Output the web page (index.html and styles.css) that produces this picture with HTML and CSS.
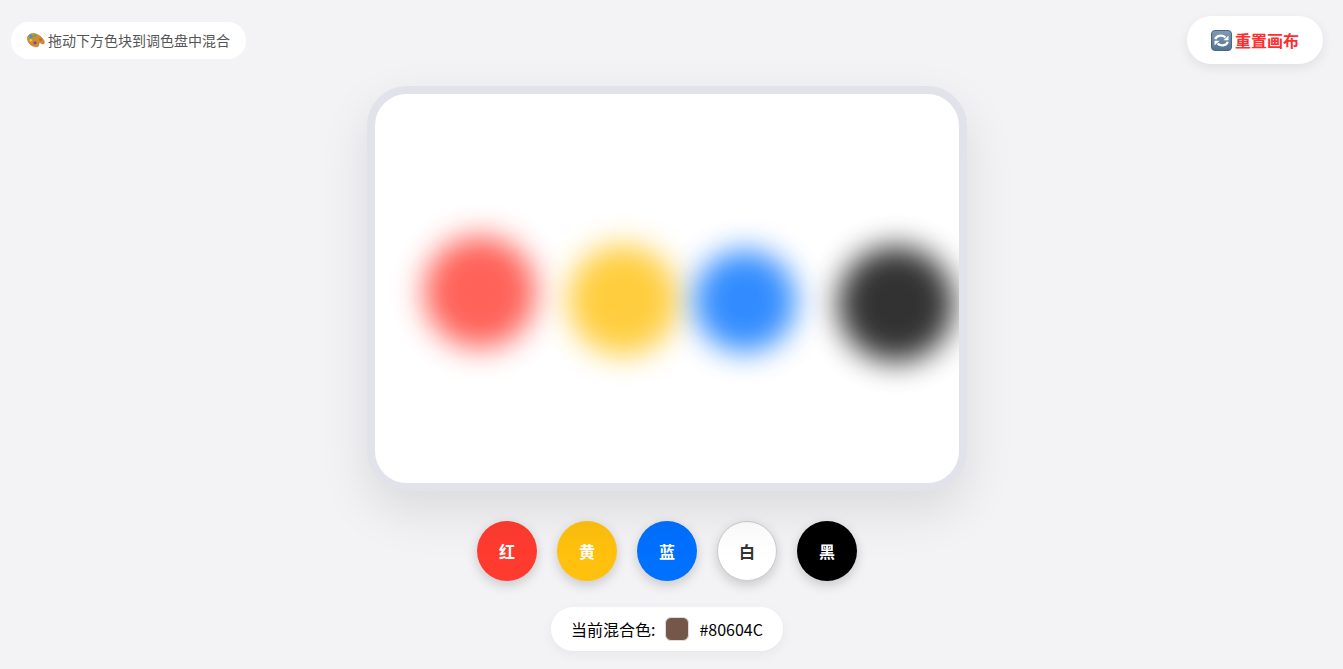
FILE: index.html
```html
<!DOCTYPE html>
<html>
<head>
    <title>调色盘</title>
    <link rel="stylesheet" href="styles.css">
</head>
<body>
    <div id="topBar">
        <div class="hint">
            <svg class="hint-icon" viewBox="0 0 18 16">
                <path d="M.5 5.500C1 2.500 4.500 .8 8 1.700c3.600.9 7.500 3.700 9 7 .7 1.700.3 3.300-1 3.300-1.500 0-2.700-1.800-3.700-1-1 .8-.1 1.900-.8 3-1 1.300-3.800 1-6.200-.2C2.300 12.300 0 8.800.5 5.500z" fill="#cf8f2c" stroke="#9a6420" stroke-width=".5"/>
                <circle cx="4" cy="4.500" r="1.700" fill="#2f9be6"/>
                <circle cx="8" cy="3.700" r="1.300" fill="#45b84a"/>
                <circle cx="3.800" cy="8.300" r="1.300" fill="#e8c53a"/>
                <circle cx="8" cy="10.800" r="1.600" fill="#8a3fc6"/>
                <circle cx="13.500" cy="7.700" r="1.300" fill="#e2503a"/>
            </svg>
            拖动下方色块到调色盘中混合
        </div>
        <button class="reset-btn">
            <svg class="reset-icon" viewBox="0 0 21 21">
                <defs>
                    <linearGradient id="resetFill" x1="0" y1="0" x2="0" y2="1">
                        <stop offset="0" stop-color="#7f9cb8"/>
                        <stop offset="1" stop-color="#527391"/>
                    </linearGradient>
                </defs>
                <rect x=".5" y=".5" width="20" height="20" rx="3.500" fill="url(#resetFill)" stroke="#4a6682"/>
                <path d="M4.300 9.300C5 5.800 10.500 4.200 14.500 7.300" fill="none" stroke="#fff" stroke-width="2.200"/>
                <path d="M17.500 5.500v4.700h-5z" fill="#fff"/>
                <path d="M16.700 11.700C16 15.200 10.500 16.800 6.500 13.700" fill="none" stroke="#fff" stroke-width="2.200"/>
                <path d="M3.500 15.500v-4.700h5z" fill="#fff"/>
            </svg>
            重置画布
        </button>
    </div>

    <div id="main">
        <div id="palette">
            <div class="blob blob-red"></div>
            <div class="blob blob-yellow"></div>
            <div class="blob blob-blue"></div>
            <div class="blob blob-black"></div>
        </div>

        <div id="swatches">
            <div class="swatch red">红</div>
            <div class="swatch yellow">黄</div>
            <div class="swatch blue">蓝</div>
            <div class="swatch white">白</div>
            <div class="swatch black">黑</div>
        </div>

        <div id="readout">
            <span>当前混合色:</span>
            <div class="chip"></div>
            <span>#80604C</span>
        </div>
    </div>
</body>
</html>
```

FILE: styles.css
```css
body {
    margin: 0;
    height: 669px;
    overflow: hidden;
    background: #f3f3f5;
    font-family: "Noto Sans CJK SC", "Noto Sans", sans-serif;
    color: #000;
}

#topBar {
    display: flex;
    justify-content: space-between;
    align-items: center;
    height: 48px;
    padding: 16px 20px 0 11px;
}

.hint {
    display: flex;
    align-items: center;
    gap: 3px;
    height: 37px;
    padding: 0 16px;
    background: #fff;
    border-radius: 18px;
    font-size: 14px;
    line-height: 34px;
    color: #555;
}

.hint-icon {
    width: 18px;
    height: 16px;
}

.reset-btn {
    display: flex;
    align-items: center;
    gap: 3px;
    height: 48px;
    padding: 0 24px;
    border: none;
    background: #fff;
    border-radius: 24px;
    font-family: inherit;
    font-size: 16px;
    font-weight: 700;
    color: #ff2d2d;
    box-shadow: 0 4px 12px rgba(0,0,0,0.08);
}

.reset-icon {
    width: 21px;
    height: 21px;
}

#main {
    display: flex;
    flex-direction: column;
    align-items: center;
    width: 1334px;
    margin-top: 22px;
}

#palette {
    position: relative;
    width: 584px;
    height: 389px;
    background: #fff;
    border: 8px solid #e2e2ea;
    border-radius: 40px;
    overflow: hidden;
    box-shadow: 0 20px 50px rgba(0,0,0,0.1);
}

.blob {
    position: absolute;
    border-radius: 50%;
    filter: blur(15px);
    opacity: 0.8;
}

.blob-red { left: 49px; top: 142px; width: 112px; height: 112px; background: #ff3b30; }
.blob-yellow { left: 193px; top: 151px; width: 110px; height: 110px; background: #ffc10e; }
.blob-blue { left: 319px; top: 156px; width: 102px; height: 102px; background: #0070ff; }
.blob-black { left: 463px; top: 152px; width: 116px; height: 116px; background: #000; }

#swatches {
    display: flex;
    gap: 20px;
    margin-top: 30px;
}

.swatch {
    display: flex;
    justify-content: center;
    align-items: center;
    width: 60px;
    height: 60px;
    box-sizing: border-box;
    border-radius: 50%;
    font-size: 16px;
    font-weight: 700;
    line-height: 58px;
    color: #fff;
    box-shadow: 0 4px 12px rgba(0,0,0,0.18);
}

.swatch.red { background: #ff3b30; }
.swatch.yellow { background: #ffc10e; }
.swatch.blue { background: #0070ff; }
.swatch.white { background: #fff; color: #333; border: 1px solid #ccc; }
.swatch.black { background: #000; }

#readout {
    display: flex;
    align-items: center;
    gap: 10px;
    height: 44px;
    margin-top: 26px;
    padding: 0 20px;
    background: #fff;
    border-radius: 22px;
    font-size: 16px;
    box-shadow: 0 4px 12px rgba(0,0,0,0.05);
}

.chip {
    width: 24px;
    height: 24px;
    box-sizing: border-box;
    background: #75574a;
    border: 1px solid #ddd;
    border-radius: 6px;
}
```
